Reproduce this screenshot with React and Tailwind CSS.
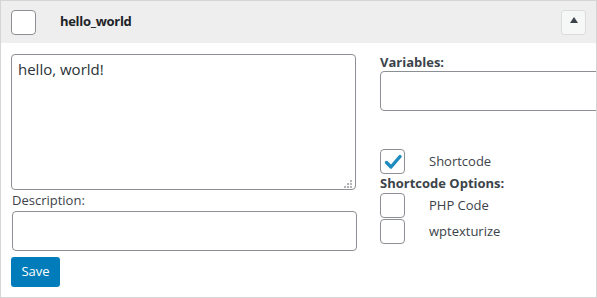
import React, { useState } from "react";

const Box = ({ checked, onClick }) => (
  <button
    type="button"
    onClick={onClick}
    className="w-[25px] h-[25px] shrink-0 rounded-[4px] border border-[#8c8f94] bg-white flex items-center justify-center"
  >
    {checked && (
      <svg width="20" height="20" viewBox="0 0 20 20">
        <path d="M3.5 10.5 L8 15 L17 4.5" fill="none" stroke="#1e8cbe" strokeWidth="3.4" strokeLinecap="round" strokeLinejoin="round" />
      </svg>
    )}
  </button>
);

const App = () => {
  const [opts, setOpts] = useState({ shortcode: true, php: false, wptexturize: false });
  const toggle = (k) => setOpts({ ...opts, [k]: !opts[k] });

  return (
    <div className="w-[597px] h-[298px] bg-white overflow-hidden text-[13px] text-[#3c434a]" style={{ fontFamily: '"Open Sans", "Noto Sans", sans-serif' }}>
      <div className="w-[597px] h-[298px] border border-[#d5d5d5] overflow-hidden flex flex-col">
        {/* header */}
        <div className="h-[42px] shrink-0 bg-[#eeeeee] flex items-center pl-[10px] pr-[10px]">
          <Box />
          <span className="ml-[24px] font-bold text-[#1d2327] text-[13px] tracking-[-0.3px]">hello_world</span>
          <button type="button" className="ml-auto w-[25px] h-[25px] rounded-[3px] border border-[#dcdcde] bg-[#f6f7f7] flex justify-center pt-[6px]">
            <svg width="8" height="6" viewBox="0 0 8 6">
              <path d="M0 6 L4 0 L8 6 Z" fill="#3c434a" />
            </svg>
          </button>
        </div>

        {/* body */}
        <div className="flex pl-[10px] pt-[11px] gap-[24px]">
          <div className="w-[345px] shrink-0 flex flex-col">
            <div className="relative">
              <textarea
                defaultValue="hello, world!"
                className="block w-[345px] h-[136px] resize-none rounded-[4px] border border-[#8c8f94] px-[6px] py-[3px] text-[15px] text-[#2c3338] leading-[22px] outline-none"
              />
              {/* resize grip */}
              <svg className="absolute left-[333px] top-[126px]" width="8" height="8" viewBox="0 0 8 8">
                <rect x="6" y="0" width="2" height="2" fill="#b4b4b4" />
                <rect x="3" y="3" width="2" height="2" fill="#b4b4b4" />
                <rect x="6" y="3" width="2" height="2" fill="#b4b4b4" />
                <rect x="0" y="6" width="2" height="2" fill="#b4b4b4" />
                <rect x="3" y="6" width="2" height="2" fill="#b4b4b4" />
                <rect x="6" y="6" width="2" height="2" fill="#b4b4b4" />
              </svg>
            </div>
            <div className="h-[21px] leading-[21px] pl-[1px]">Description:</div>
            <input type="text" className="w-[345px] h-[40px] ml-[1px] rounded-[4px] border border-[#8c8f94] outline-none" />
            <button type="button" className="mt-[6px] w-[49px] h-[30px] rounded-[3px] bg-[#007cba] text-white text-[13px]">
              Save
            </button>
          </div>

          <div className="flex-1 flex flex-col">
            <div className="h-[16px] leading-[16px] font-bold mb-[1px]">Variables:</div>
            <input type="text" className="w-[240px] h-[40px] rounded-[4px] border border-[#8c8f94] outline-none" />
            <div className="mt-[38px] flex items-center">
              <Box checked={opts.shortcode} onClick={() => toggle("shortcode")} />
              <span className="ml-[24px]">Shortcode</span>
            </div>
            <div className="h-[19px] leading-[19px] font-bold">Shortcode Options:</div>
            <div className="flex items-center">
              <Box checked={opts.php} onClick={() => toggle("php")} />
              <span className="ml-[24px]">PHP Code</span>
            </div>
            <div className="mt-[1px] flex items-center">
              <Box checked={opts.wptexturize} onClick={() => toggle("wptexturize")} />
              <span className="ml-[24px]">wptexturize</span>
            </div>
          </div>
        </div>
      </div>
    </div>
  );
};

export default App;
